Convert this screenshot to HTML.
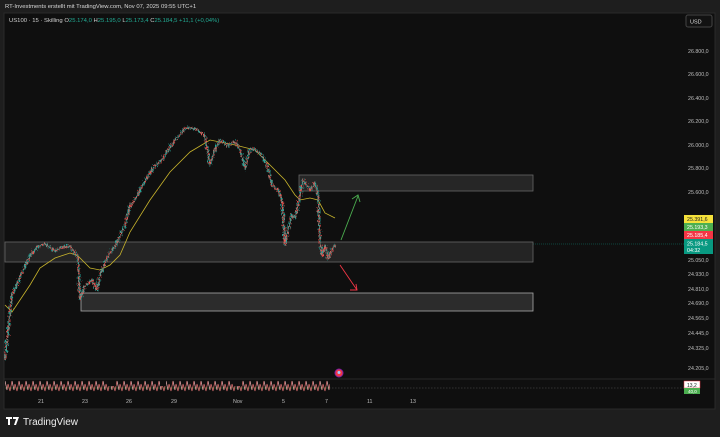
<!DOCTYPE html>
<html><head><meta charset="utf-8"><style>
body{margin:0;width:720px;height:437px;background:#1e1e1e;overflow:hidden;font-family:"Liberation Sans",sans-serif}
svg{position:absolute;left:0;top:0}
</style></head><body>
<svg width="720" height="437" viewBox="0 0 720 437" font-family="Liberation Sans, sans-serif">
<defs>
<filter id="j" x="-5%" y="-10%" width="110%" height="120%">
<feTurbulence type="fractalNoise" baseFrequency="0.9 0.3" numOctaves="2" seed="3" result="n"/>
<feDisplacementMap in="SourceGraphic" in2="n" scale="7" xChannelSelector="R" yChannelSelector="G"/>
</filter>
<filter id="j2" x="-5%" y="-10%" width="110%" height="120%">
<feTurbulence type="fractalNoise" baseFrequency="0.8 0.4" numOctaves="2" seed="9" result="n"/>
<feDisplacementMap in="SourceGraphic" in2="n" scale="7" xChannelSelector="R" yChannelSelector="G"/>
</filter>
<pattern id="zz" x="5" y="380" width="7" height="12" patternUnits="userSpaceOnUse">
<polyline points="0,1 2,10 3,4 5,11 7,1" fill="none" stroke="#e57373" stroke-width="0.7"/>
<line x1="0" y1="1" x2="2" y2="10" stroke="#ddd" stroke-width="0.4"/>
</pattern>
</defs>
<rect x="0" y="0" width="720" height="437" fill="#1e1e1e"/>
<rect x="4" y="13" width="711" height="396" fill="#0f0f0f" stroke="#2a2a2a"/>
<text x="5" y="8" font-size="5.9" fill="#d8d8d8">RT-Investments erstellt mit TradingView.com, Nov 07, 2025 09:55 UTC+1</text>
<text x="9" y="22" font-size="5.9" fill="#d0d0d0">US100 · 15 · Skilling  O<tspan fill="#22ab94">25.174,0</tspan> H<tspan fill="#22ab94">25.195,0</tspan> L<tspan fill="#22ab94">25.173,4</tspan> C<tspan fill="#22ab94">25.184,5  +11,1 (+0,04%)</tspan></text>
<rect x="686" y="15" width="26" height="12" rx="2" fill="#121212" stroke="#444"/>
<text x="690" y="23.5" font-size="5.5" fill="#ddd">USD</text>
<g font-size="5.3" fill="#bdbdbd">
<text x="688" y="53">26.800,0</text><text x="688" y="76">26.600,0</text><text x="688" y="100">26.400,0</text><text x="688" y="123">26.200,0</text><text x="688" y="147">26.000,0</text><text x="688" y="170">25.800,0</text><text x="688" y="194">25.600,0</text><text x="688" y="262">25.050,0</text><text x="688" y="276">24.930,0</text><text x="688" y="291">24.810,0</text><text x="688" y="305">24.690,0</text><text x="688" y="320">24.565,0</text><text x="688" y="335">24.445,0</text><text x="688" y="350">24.325,0</text><text x="688" y="370">24.205,0</text>
</g>
<rect x="684" y="215" width="29" height="8" fill="#f5e13b"/><text x="687" y="221" font-size="5.3" fill="#222">25.391,6</text>
<rect x="684" y="223" width="29" height="8" fill="#4caf50"/><text x="687" y="229" font-size="5.3" fill="#fff">25.193,3</text>
<rect x="684" y="231" width="29" height="8" fill="#f23645"/><text x="687" y="237" font-size="5.3" fill="#fff">25.185,4</text>
<rect x="684" y="239" width="29" height="15" fill="#089981"/><text x="687" y="245.5" font-size="5.3" fill="#fff">25.184,5</text><text x="687" y="252" font-size="5.3" fill="#fff">04:32</text>
<line x1="5" y1="244" x2="684" y2="244" stroke="#089981" stroke-width="0.4" stroke-dasharray="1,1"/>
<g stroke="#666" stroke-width="0.8" fill="#262626">
<rect x="299" y="175" width="234" height="16"/>
<rect x="5" y="242" width="528" height="20" fill="#242424"/>
<rect x="81" y="293" width="452" height="18" fill="#2c2c2c" stroke="#aaa"/>
</g>
<polyline fill="none" stroke="#c8b42c" stroke-width="0.8" points="5,305 12,312 20,300 30,285 40,268 55,258 70,253 78,256 90,268 100,270 110,265 120,255 130,232 150,200 170,172 190,152 210,140 235,145 255,150 270,165 285,180 295,195 300,200 310,198 318,200 325,213 335,218"/>
<g fill="none">
<polyline filter="url(#j)" stroke="#26a69a" stroke-width="1.5" points="5,360 8,330 12,295 18,282 25,266 30,256 38,246 45,244 55,251 62,247 70,246 78,258 80,300 85,286 92,280 97,290 100,275 108,256 115,246 125,226 130,206 135,200 140,190 148,176 155,166 162,160 168,150 175,140 180,135 185,128 192,128 198,130 205,136 210,165 215,150 220,140 228,146 235,141 240,150 245,168 250,148 256,150 262,155 268,168 272,185 278,190 282,200 285,245 288,230 292,215 295,218 300,196 303,180 310,190 315,183 318,195 320,240 322,256 325,245 328,258 332,250 335,245"/>
<polyline filter="url(#j2)" stroke="#ef5350" stroke-width="0.9" points="5,360 8,330 12,295 18,282 25,266 30,256 38,246 45,244 55,251 62,247 70,246 78,258 80,300 85,286 92,280 97,290 100,275 108,256 115,246 125,226 130,206 135,200 140,190 148,176 155,166 162,160 168,150 175,140 180,135 185,128 192,128 198,130 205,136 210,165 215,150 220,140 228,146 235,141 240,150 245,168 250,148 256,150 262,155 268,168 272,185 278,190 282,200 285,245 288,230 292,215 295,218 300,196 303,180 310,190 315,183 318,195 320,240 322,256 325,245 328,258 332,250 335,245"/>
</g>
<g stroke="#4caf50" stroke-width="0.9" fill="none"><line x1="341" y1="240" x2="358" y2="196"/><polyline points="352,199 358,195 360,202"/></g>
<g stroke="#f23645" stroke-width="0.9" fill="none"><line x1="340" y1="265" x2="357" y2="290"/><polyline points="350,290 357,290 356,284"/></g>
<line x1="4" y1="379" x2="715" y2="379" stroke="#2a2a2a"/>
<line x1="5" y1="388" x2="684" y2="388" stroke="#555" stroke-width="0.6" stroke-dasharray="1.5,1.5"/>
<line x1="5" y1="388" x2="330" y2="388" stroke="#2e7d32" stroke-width="0.6"/>
<rect x="5" y="380" width="325" height="12" fill="url(#zz)"/>
<g fill="#0f0f0f"><rect x="108" y="380" width="8" height="6"/><rect x="160" y="380" width="6" height="6"/><rect x="233" y="380" width="9" height="6"/></g>
<circle cx="339" cy="373" r="4" fill="#f23645" stroke="#7b1fa2"/>
<circle cx="339" cy="372.5" r="1.5" fill="#9ecbff"/>
<rect x="684" y="381" width="16" height="7" fill="#fff" stroke="#f23645" stroke-width="0.5"/><text x="687" y="387" font-size="5" fill="#222">13,2</text>
<rect x="684" y="388" width="16" height="6" fill="#4caf50"/><text x="688" y="393" font-size="4.5" fill="#fff">40,0</text>
<g font-size="5.3" fill="#bdbdbd">
<text x="38" y="403">21</text><text x="82" y="403">23</text><text x="126" y="403">26</text><text x="171" y="403">29</text><text x="233" y="403">Nov</text><text x="282" y="403">5</text><text x="325" y="403">7</text><text x="367" y="403">11</text><text x="410" y="403">13</text>
</g>
<path d="M6,417h6v2h-2v6h-2v-6h-2z M13,417h6l-3,8h-2l2,-6h-3z" fill="#fff"/>
<text x="23" y="425" font-size="10" fill="#f0f0f0">TradingView</text>
</svg>
</body></html>
